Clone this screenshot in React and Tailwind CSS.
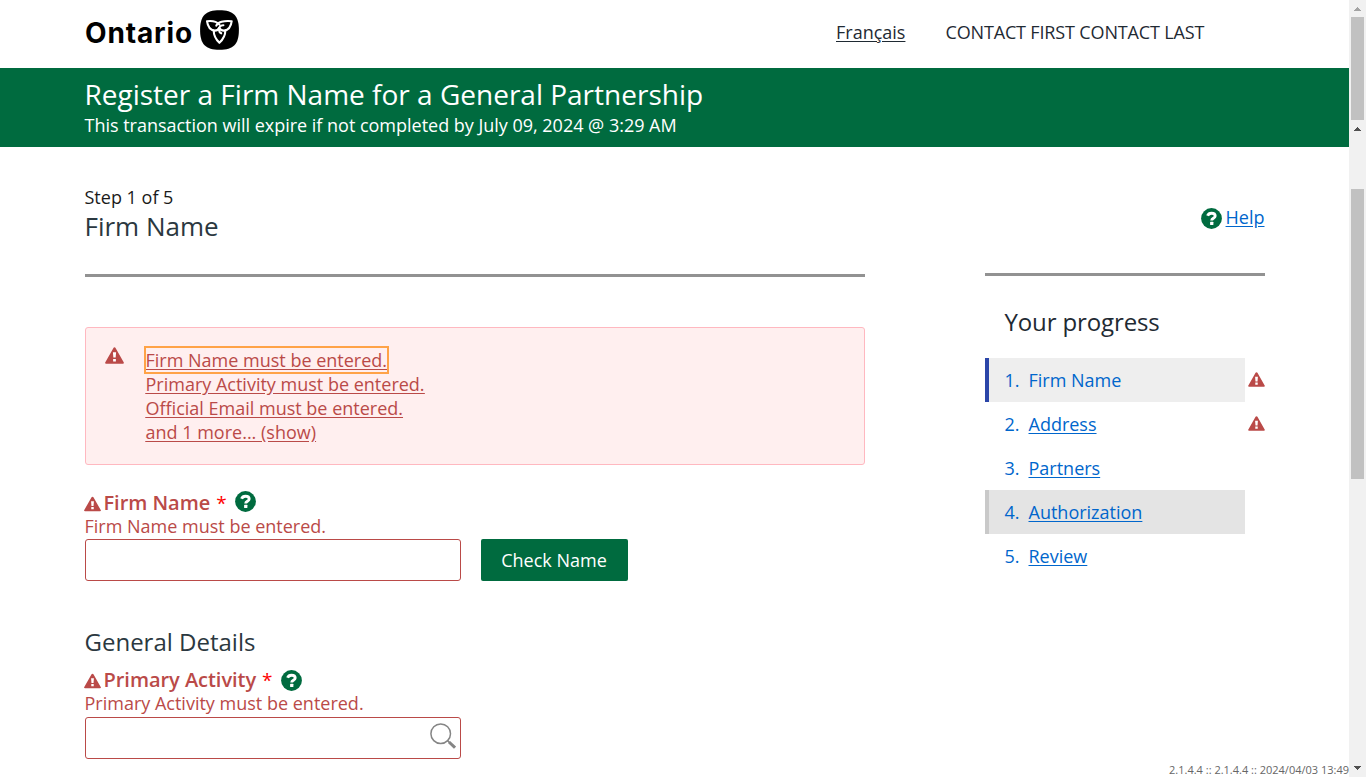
import React from "react";

function Warning({ className }) {
  return (
    <svg viewBox="0 0 18 16" className={className} aria-hidden="true">
      <path d="M9 .3c.5 0 .8.2 1 .6l7.7 13.4c.5.9.1 1.4-.8 1.4H1.100c-.9 0-1.300-.5-.8-1.400L8 .900C8.200.500 8.500.300 9 .300z" fill="#ba4a48" />
      <path d="M7.500 5h3l-.4 5H7.900zM7.700 11.300h2.600v2.300H7.700z" fill="#fff" />
    </svg>
  );
}

function HelpIcon() {
  return (
    <svg viewBox="0 0 21 21" className="size-[21px] shrink-0" aria-hidden="true">
      <circle cx="10.5" cy="10.5" r="10.4" fill="#006b3f" />
      <path d="M6.600 7.700C7.300 5.900 8.600 5.200 10.500 5.200c2.200 0 3.700 1 3.700 2.800 0 2.300-3.500 2.200-3.500 4.400" fill="none" stroke="#fff" strokeWidth="2.900" />
      <rect x="9.100" y="13.800" width="3.300" height="3.200" rx=".5" fill="#fff" />
    </svg>
  );
}

function Trillium() {
  return (
    <svg viewBox="0 0 39 40" className="h-10 w-[39px]" aria-hidden="true">
      <path d="M19.500 .2C33.500 .2 38.900 5.800 38.900 20S33.500 39.800 19.500 39.800 .1 34.200 .1 20 5.500 .2 19.500 .2z" fill="#000" />
      <g fill="none" stroke="#fff" strokeWidth="2.100" strokeLinejoin="round" strokeLinecap="round">
        <path d="M19.400 14.600C16.500 11.300 12 10.500 7 11.200c.6 4.400 3 8.900 7.500 9.400 2.100.1 3.800-.8 4.500-2.600" />
        <path d="M16.300 15.700c1.300-3.400 7.500-5.400 15.400-4.500-.6 4.600-3 8.900-7.400 9.400-2.400.1-4-.8-4.900-2.600" />
        <path d="M13.700 20.500c0 4.600 2.300 9 5.700 12.300 3.500-3.300 6-7.700 5.900-12.300" />
        <path d="M23.400 15.200c-2.900-.2-4.800 2-4.500 4.600.2 1.700 1.100 2.900 2.300 3.500" />
      </g>
    </svg>
  );
}

function Field({ label, children, className, helpClass = "" }) {
  return (
    <div className={className}>
      <div className="mb-[-1px] flex h-6 items-center text-[#ba4a48]">
        <Warning className="mt-[2px] mr-[2.5px] ml-[-1px] h-[16px] w-[17px]" />
        <span className="text-[20px] font-semibold leading-6 tracking-[-0.04px]">{label}</span>
        <span className="ml-[6px] mr-2 text-[19px] font-normal leading-6 text-[#f00]">*</span>
        <div className={helpClass}><HelpIcon /></div>
      </div>
      <div className="ml-[-0.5px] h-6 text-[#ba4a48]">{label} must be entered.</div>
      {children}
    </div>
  );
}

const steps = [
  { name: "Firm Name", row: "border-[#2b45a8] bg-[#eee]", link: "", warn: true },
  { name: "Address", row: "border-transparent", link: "underline", warn: true },
  { name: "Partners", row: "border-transparent", link: "underline" },
  { name: "Authorization", row: "border-[#c9c9c9] bg-[#e4e4e4]", link: "underline" },
  { name: "Review", row: "border-transparent", link: "underline" },
];

function Arrow({ down, className }) {
  return (
    <svg viewBox="0 0 7 4" shapeRendering="crispEdges" className={className} aria-hidden="true">
      <path d={down ? "M0 0h7L3.500 4z" : "M0 4h7L3.500 0z"} fill="currentColor" />
    </svg>
  );
}

export default function App() {
  return (
    <div className="flex h-[777px] w-[1366px] overflow-hidden bg-white font-['Open_Sans',sans-serif] text-[18px] leading-6 text-[#1a1a1a] [text-underline-offset:2px] [text-decoration-thickness:1px]">
      <div className="flex w-[1349px] flex-col">
        <header className="flex h-[68px] shrink-0 pl-[85px]">
          <div className="flex w-[751px] pt-[10px]">
            <span className="w-[114.500px] pt-px font-[Inter,sans-serif] text-[28px] font-bold leading-[44px] tracking-[0.85px] text-black">Ontario</span>
            <Trillium />
          </div>
          <div className="flex gap-10 pt-5 text-[#1f2a33]">
            <a className="underline">Français</a>
            <span className="whitespace-nowrap tracking-[-0.15px]">CONTACT FIRST CONTACT LAST</span>
          </div>
        </header>
        <div className="h-[79px] shrink-0 bg-[#006b3f] pt-3 pl-[84.5px] text-white">
          <h1 className="h-[33px] text-[28px] leading-7">Register a Firm Name for a General Partnership</h1>
          <p className="tracking-[-0.015px]">This transaction will expire if not completed by July 09, 2024 @ 3:29 AM</p>
        </div>
        <div className="flex min-h-0 flex-1 gap-[120px] pl-[85px]">
          <main className="w-[780px] pt-[38px]">
            <p className="ml-[-0.5px] h-7">Step 1 of 5</p>
            <h2 className="ml-[-0.5px] h-[61px] text-[26px] leading-[26px] text-[#2b3840]">Firm Name</h2>
            <div className="h-[3px] bg-[#929292]" />
            <div className="mt-[50px] flex h-[138px] rounded-[3px] border border-[#ffb8c0] bg-[#ffefef] pt-5 pl-[19px] text-[#ba4a48]">
              <Warning className="mt-[-1px] h-[17px] w-[19px]" />
              <div className="ml-[21.500px] flex flex-col items-start underline">
                <a className="outline-2 outline-[#ffa347]">Firm Name must be entered.</a>
                <a>Primary Activity must be entered.</a>
                <a>Official Email must be entered.</a>
                <a>and 1 more... (show)</a>
              </div>
            </div>
            <Field label="Firm Name" className="mt-[26px]" helpClass="mb-1">
              <div className="mt-px flex gap-5">
                <input className="h-[42px] w-[376px] rounded-[3px] border border-[#ba4a48] bg-white" aria-label="Firm Name" />
                <button className="h-[42px] w-[147px] rounded-[2px] bg-[#006b3f] pr-px font-medium text-white">Check Name</button>
              </div>
            </Field>
            <h3 className="mt-[47px] ml-[-0.5px] text-[24px] leading-7 text-[#2b3840]">General Details</h3>
            <Field label="Primary Activity" className="mt-[12px]">
              <div className="mt-[2px] flex h-[42px] w-[376px] items-start justify-end rounded-[3px] border border-[#ba4a48] pt-[5px] pr-[4px]">
                <svg viewBox="0 0 26 26" className="size-[26px]" fill="none" stroke="#858585" aria-hidden="true">
                  <circle cx="10.700" cy="10.700" r="9.800" strokeWidth="1.500" />
                  <path d="M17.500 17.500l2 2" strokeWidth="1.600" />
                  <path d="M19 19l6 5.700" strokeWidth="3" />
                </svg>
              </div>
            </Field>
          </main>
          <aside className="flex w-[364px] flex-col pt-[58px]">
            <div className="flex h-[68px] w-[279.500px] items-start justify-end gap-1">
              <div className="pt-[3px]"><HelpIcon /></div>
              <a className="text-[#0066cc] underline">Help</a>
            </div>
            <div className="h-[3px] w-[280px] bg-[#929292]" />
            <h3 className="mt-8 ml-[19.500px] h-[50px] text-[24px] leading-7 tracking-[-0.12px] text-[#1f2a33]">Your progress</h3>
            <ol className="text-[#0066cc]">
              {steps.map((s, i) => (
                <li key={s.name} className="flex h-11 items-center">
                  <div className={"flex h-11 w-[260px] items-center border-l-4 pl-[15.5px] " + s.row}>
                    <span className="w-6">{i + 1}.</span>
                    <a className={s.link}>{s.name}</a>
                  </div>
                  {s.warn && <Warning className="mt-[-1px] ml-[3px] h-[15px] w-[17px]" />}
                </li>
              ))}
            </ol>
            <footer className="mt-auto self-end whitespace-nowrap text-[11px] leading-[15px] text-[#666]">2.1.4.4 :: 2.1.4.4 :: 2024/04/03 13:49</footer>
          </aside>
        </div>
      </div>
      <div className="flex w-[17px] flex-col items-center bg-[#f1f1f1]">
        <div className="flex h-[17px] items-start pt-[7px]"><Arrow className="h-1 w-[7px] text-[#a3a3a3]" /></div>
        <div className="h-[103px] w-[13px] bg-[#c1c1c1]" />
        <div className="flex h-[69px] items-start pt-[7px]"><Arrow className="h-1 w-[7px] text-[#505050]" /></div>
        <div className="h-[290px] w-[13px] bg-[#c1c1c1]" />
        <div className="mt-auto pb-[7px]"><Arrow down className="block h-1 w-[7px] text-[#505050]" /></div>
      </div>
    </div>
  );
}
